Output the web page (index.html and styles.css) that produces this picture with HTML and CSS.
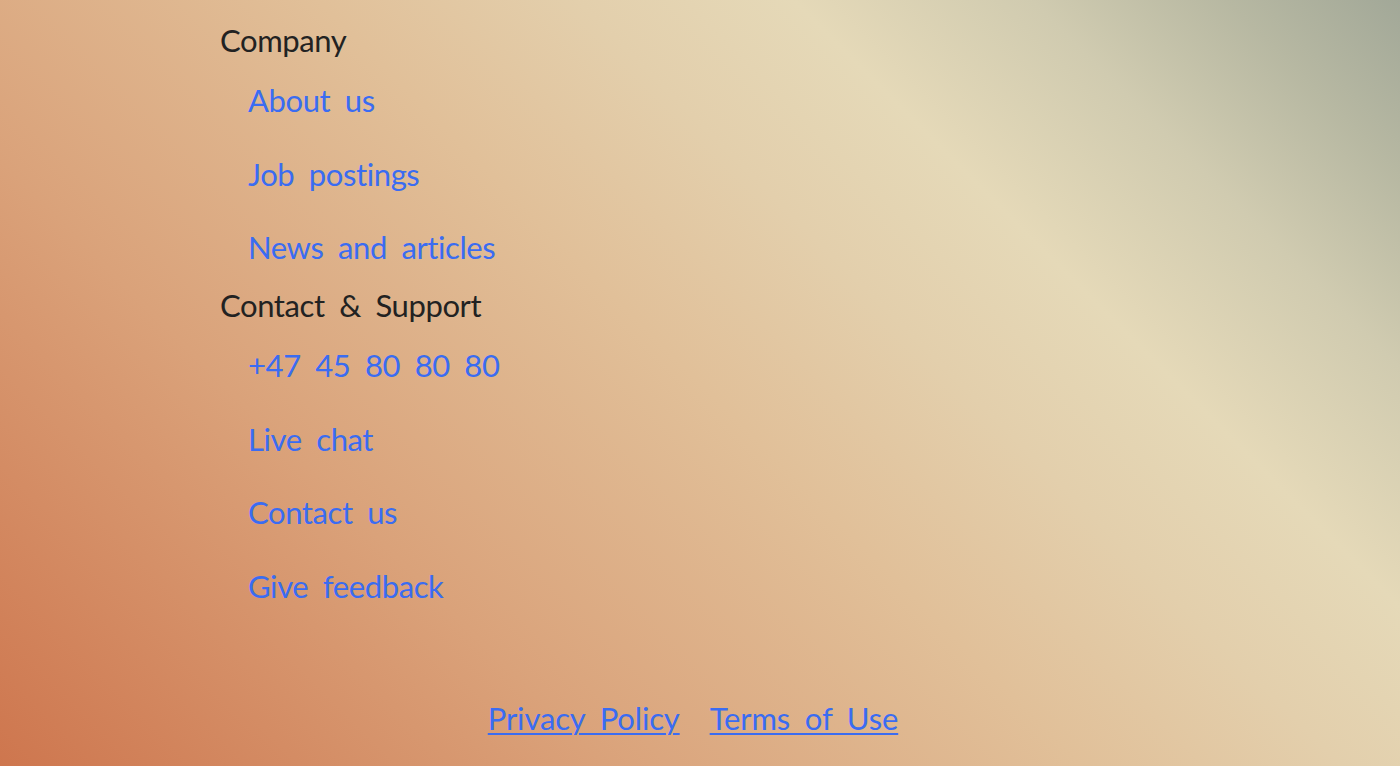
FILE: index.html
```html
<!DOCTYPE html>
<html lang="en">
<head>
<meta charset="utf-8">
<title>Footer</title>
<link rel="stylesheet" href="styles.css">
</head>
<body>
<div class="page">
  <nav class="footer-nav">
    <ul class="links links-first">
      <li><a href="#">Shop all product groups</a></li>
    </ul>
    <h3 class="heading">Company</h3>
    <ul class="links">
      <li><a href="#">About us</a></li>
      <li><a href="#">Job postings</a></li>
      <li><a href="#">News and articles</a></li>
    </ul>
    <h3 class="heading">Contact &amp; Support</h3>
    <ul class="links">
      <li><a href="#">+47 45 80 80 80</a></li>
      <li><a href="#">Live chat</a></li>
      <li><a href="#">Contact us</a></li>
      <li><a href="#">Give feedback</a></li>
    </ul>
  </nav>
  <footer class="legal">
    <a href="#">Privacy Policy</a>
    <a href="#">Terms of Use</a>
  </footer>
</div>
</body>
</html>
```
FILE: styles.css
```css
html, body {
  margin: 0;
  padding: 0;
  height: 100%;
  overflow: hidden;
}
body {
  font-family: "Lato", "Noto Sans", sans-serif;
  font-size: 31px;
  line-height: 44px;
  letter-spacing: -0.4px;
  word-spacing: 7px;
  font-variant-ligatures: none;
  color: #222222;
  background: linear-gradient(45deg,
    rgb(206, 118, 78) 0%,
    rgb(218, 162, 122) 28%,
    rgb(225, 192, 153) 50%,
    rgb(227, 207, 172) 62%,
    rgb(229, 217, 184) 72%,
    rgb(208, 203, 176) 83%,
    rgb(183, 184, 162) 92%,
    rgb(162, 168, 152) 100%);
}
.page {
  display: flex;
  flex-direction: column;
  height: 100%;
}
.footer-nav {
  padding-left: 220px;
  margin-top: -40px;
}
.heading {
  margin: 0;
  font-size: 31px;
  font-weight: 400;
  line-height: 44px;
  color: #222222;
}
.links {
  list-style: none;
  margin: 16px 0 14px;
  padding: 0 0 0 28px;
  display: flex;
  flex-direction: column;
  gap: 29.6px;
}
.links-first {
  margin-top: 0;
}
.links a,
.legal a {
  color: #3a6cf2;
  text-decoration: none;
}
.legal {
  display: flex;
  justify-content: center;
  gap: 30px;
  padding-right: 14px;
  margin-top: 74px;
  letter-spacing: -0.15px;
}
.legal a {
  text-decoration: underline;
  text-decoration-thickness: 2px;
  text-underline-offset: 3px;
}
```
